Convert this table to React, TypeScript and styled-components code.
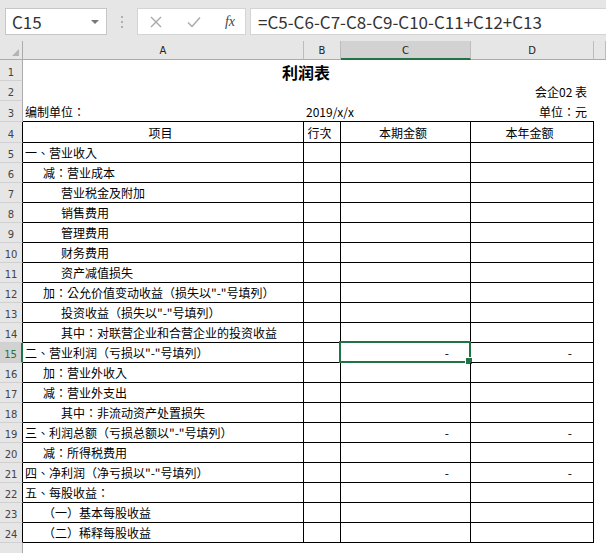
import React from "react";
import styled, { createGlobalStyle, css } from "styled-components";

const GREEN = "#217346";
const CJK = `"Noto Sans CJK TC", "Noto Sans CJK SC", "Noto Sans", sans-serif`;

const Global = createGlobalStyle`
  html, body { margin: 0; padding: 0; background: #fff; }
  body { font-family: ${CJK}; overflow: hidden; }
  * { box-sizing: border-box; }
`;

const Page = styled.div`
  width: 606px;
  height: 553px;
  overflow: hidden;
  background: #fff;
  display: flex;
  flex-direction: column;
`;

const FormulaBar = styled.div`
  flex: none;
  height: 41px;
  background: #e6e6e6;
  display: flex;
  align-items: flex-start;
  padding: 8px 0 0 5px;
`;

const NameBox = styled.div`
  width: 102px;
  height: 27px;
  background: #fff;
  border: 1px solid #c6c6c6;
  display: flex;
  align-items: center;
  justify-content: space-between;
  padding: 0 6px 0 6px;
  font-family: "Noto Sans CJK SC", sans-serif;
  font-size: 17px;
  color: #333;
`;

const DropArrow = styled.span`
  width: 0;
  height: 0;
  border-left: 4px solid transparent;
  border-right: 4px solid transparent;
  border-top: 4px solid #777;
  margin-right: 1px;
`;

const Grip = styled.div`
  width: 30px;
  height: 27px;
  display: flex;
  align-items: center;
  justify-content: center;
`;

const FxGroup = styled.div`
  width: 109px;
  height: 27px;
  background: #fff;
  border: 1px solid #d4d4d4;
  display: flex;
  align-items: center;
  padding: 0 10px 0 11px;
  justify-content: space-between;
`;

const FxLabel = styled.span`
  font-family: "Liberation Serif", serif;
  font-style: italic;
  font-size: 14px;
  color: #444;
`;

const FormulaInput = styled.div`
  flex: 1;
  margin-left: 4px;
  height: 27px;
  background: #fff;
  border: 1px solid #d4d4d4;
  border-right: none;
  display: flex;
  align-items: center;
  padding-left: 7px;
  font-family: "Noto Sans CJK SC", sans-serif;
  font-size: 17px;
  color: #333;
  white-space: nowrap;
`;

const Sheet = styled.div`
  display: grid;
  grid-template-columns: 23px 281px 37px 130px 123px 1fr;
  grid-template-rows: 19px 21px 20px 21px 21px repeat(21, 20px);
`;

const Corner = styled.div`
  background: #e6e6e6;
  border-right: 1px solid #ababab;
  border-bottom: 1px solid #ababab;
  position: relative;
  &::after {
    content: "";
    position: absolute;
    right: 3px;
    bottom: 3px;
    border-left: 7px solid transparent;
    border-bottom: 7px solid #b4b4b4;
  }
`;

const ColHead = styled.div<{ $active?: boolean }>`
  background: ${(p) => (p.$active ? "#d2d2d2" : "#e6e6e6")};
  border-right: 1px solid #bcbcbc;
  border-bottom: ${(p) => (p.$active ? `2px solid ${GREEN}` : "1px solid #ababab")};
  display: flex;
  align-items: center;
  justify-content: center;
  font-family: "DejaVu Sans", sans-serif;
  font-size: 10px;
  color: #222;
  padding-top: ${(p) => (p.$active ? "1px" : "0")};
`;

const RowHead = styled.div<{ $active?: boolean; $boxed?: boolean }>`
  background: ${(p) => (p.$active ? "#d2d2d2" : "#e6e6e6")};
  border-right: ${(p) =>
    p.$active ? `2px solid ${GREEN}` : p.$boxed ? "1px solid #000" : "1px solid #ababab"};
  border-bottom: 1px solid #d0d0d0;
  display: flex;
  align-items: flex-end;
  justify-content: center;
  padding-bottom: 0;
  font-family: "DejaVu Sans", sans-serif;
  font-size: 10px;
  line-height: 14px;
  color: ${(p) => (p.$active ? GREEN : "#444")};
`;

const Cell = styled.div<{
  $span?: number;
  $boxed?: boolean;
  $bottom?: boolean;
  $align?: "left" | "center" | "right";
  $indent?: number;
  $pad?: number;
}>`
  position: relative;
  grid-column: span ${(p) => p.$span ?? 1};
  display: flex;
  align-items: center;
  justify-content: ${(p) =>
    p.$align === "center" ? "center" : p.$align === "right" ? "flex-end" : "flex-start"};
  padding-left: ${(p) => 2 + (p.$indent ?? 0) * 18}px;
  padding-right: ${(p) => p.$pad ?? 7}px;
  font-size: 12px;
  color: #000;
  white-space: nowrap;
  ${(p) =>
    p.$boxed &&
    css`
      border-right: 1px solid #000;
      border-bottom: 1px solid #000;
    `}
  ${(p) =>
    p.$bottom &&
    css`
      border-bottom: 1px solid #000;
    `}
`;

const Title = styled(Cell)`
  font-size: 16px;
  font-weight: bold;
  padding-top: 2px;
`;

const Selection = styled.div`
  position: absolute;
  left: -2px;
  top: -2px;
  right: -1px;
  bottom: -1px;
  border: 2px solid ${GREEN};
  pointer-events: none;
  &::after {
    content: "";
    position: absolute;
    right: -4px;
    bottom: -4px;
    width: 6px;
    height: 6px;
    background: ${GREEN};
    border: 1px solid #fff;
  }
`;

type Item = { label: string; indent: number; dash?: boolean };

const items: Item[] = [
  { label: "一、营业收入", indent: 0 },
  { label: "减：营业成本", indent: 1 },
  { label: "营业税金及附加", indent: 2 },
  { label: "销售费用", indent: 2 },
  { label: "管理费用", indent: 2 },
  { label: "财务费用", indent: 2 },
  { label: "资产减值损失", indent: 2 },
  { label: "加：公允价值变动收益（损失以\"-\"号填列）", indent: 1 },
  { label: "投资收益（损失以\"-\"号填列）", indent: 2 },
  { label: "其中：对联营企业和合营企业的投资收益", indent: 2 },
  { label: "二、营业利润（亏损以\"-\"号填列）", indent: 0, dash: true },
  { label: "加：营业外收入", indent: 1 },
  { label: "减：营业外支出", indent: 1 },
  { label: "其中：非流动资产处置损失", indent: 2 },
  { label: "三、利润总额（亏损总额以\"-\"号填列）", indent: 0, dash: true },
  { label: "减：所得税费用", indent: 1 },
  { label: "四、净利润（净亏损以\"-\"号填列）", indent: 0, dash: true },
  { label: "五、每股收益：", indent: 0 },
  { label: "（一）基本每股收益", indent: 1 },
  { label: "（二）稀释每股收益", indent: 1 },
];

const GripDots = () => (
  <svg width="4" height="14" viewBox="0 0 4 14">
    <rect x="1" y="1" width="2" height="2" fill="#b0b0b0" />
    <rect x="1" y="6" width="2" height="2" fill="#b0b0b0" />
    <rect x="1" y="11" width="2" height="2" fill="#b0b0b0" />
  </svg>
);

const CancelIcon = () => (
  <svg width="14" height="14" viewBox="0 0 14 14">
    <path d="M2 2 L12 12 M12 2 L2 12" stroke="#a8a8a8" strokeWidth="1.4" fill="none" />
  </svg>
);

const CheckIcon = () => (
  <svg width="16" height="14" viewBox="0 0 16 14">
    <path d="M2 7.5 L6 11.5 L14 2.5" stroke="#a8a8a8" strokeWidth="1.4" fill="none" />
  </svg>
);

export default function App() {
  return (
    <Page>
      <Global />
      <FormulaBar>
        <NameBox>
          <span>C15</span>
          <DropArrow />
        </NameBox>
        <Grip>
          <GripDots />
        </Grip>
        <FxGroup>
          <CancelIcon />
          <CheckIcon />
          <FxLabel>fx</FxLabel>
        </FxGroup>
        <FormulaInput>=C5-C6-C7-C8-C9-C10-C11+C12+C13</FormulaInput>
      </FormulaBar>
      <Sheet>
        <Corner />
        <ColHead>A</ColHead>
        <ColHead>B</ColHead>
        <ColHead $active>C</ColHead>
        <ColHead>D</ColHead>
        <ColHead />

        <RowHead>1</RowHead>
        <Title $span={4} $align="center">利润表</Title>
        <Cell />

        <RowHead>2</RowHead>
        <Cell $span={4} $align="right">会企02 表</Cell>
        <Cell />

        <RowHead>3</RowHead>
        <Cell $bottom>编制单位：</Cell>
        <Cell $span={2} $bottom>2019/x/x</Cell>
        <Cell $bottom $align="right">单位：元</Cell>
        <Cell />

        <RowHead $boxed>4</RowHead>
        <Cell $boxed $align="center">项目</Cell>
        <Cell $boxed $align="center">行次</Cell>
        <Cell $boxed $align="center">本期金额</Cell>
        <Cell $boxed $align="center">本年金额</Cell>
        <Cell />

        {items.map((it, i) => {
          const rowNo = i + 5;
          const active = rowNo === 15;
          return (
            <React.Fragment key={rowNo}>
              <RowHead $boxed $active={active}>{rowNo}</RowHead>
              <Cell $boxed $indent={it.indent}>{it.label}</Cell>
              <Cell $boxed />
              <Cell $boxed $align="right" $pad={21}>
                {it.dash ? "-" : ""}
                {active && <Selection />}
              </Cell>
              <Cell $boxed $align="right" $pad={21}>{it.dash ? "-" : ""}</Cell>
              <Cell />
            </React.Fragment>
          );
        })}

        <RowHead />
        <Cell />
        <Cell />
        <Cell />
        <Cell />
        <Cell />
      </Sheet>
    </Page>
  );
}
